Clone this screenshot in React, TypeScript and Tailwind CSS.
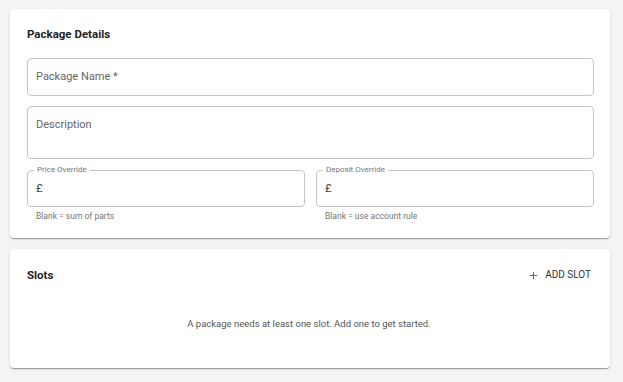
import React from "react";

const font = { fontFamily: "Roboto, 'Liberation Sans', Arial, sans-serif" };

function Outlined({ label, height, legend, value, helper }: { label?: string; height: string; legend?: string; value?: string; helper?: string }) {
  return (
    <div className="flex flex-col">
      <div className={`relative rounded-[4px] border border-[#c4c4c4] ${height}`}>
        {legend && (
          <span className="absolute left-[6px] top-[-6px] bg-white px-[3px] text-[8px] leading-[10px] text-[#757575]">
            {legend}
          </span>
        )}
        {label && (
          <div className="pl-[8px] pt-[10px] text-[11px] leading-[16px] text-[#666]">{label}</div>
        )}
        {value && (
          <div className="pl-[8px] pt-[9px] text-[11.5px] leading-[16px] text-[#444]">{value}</div>
        )}
      </div>
      {helper && (
        <div className="pl-[9px] pt-[4px] text-[8.5px] leading-[10px] text-[#757575]">{helper}</div>
      )}
    </div>
  );
}

export default function App() {
  const shadow =
    "shadow-[0_2px_1px_-1px_rgba(0,0,0,0.2),0_1px_1px_0_rgba(0,0,0,0.14),0_1px_3px_0_rgba(0,0,0,0.12)]";
  return (
    <div className="min-h-screen bg-[#f4f4f4] pl-[10px] pt-[9px]" style={font}>
      <div className={`w-[600px] rounded-[4px] bg-white pl-[17px] pr-[16px] pt-[17px] pb-[17px] ${shadow}`}>
        <div className="text-[11.5px] font-bold leading-[16px] text-[#1f1f1f]">Package Details</div>
        <div className="mt-[16px] flex flex-col gap-[10px]">
          <Outlined label="Package Name *" height="h-[38px]" />
          <Outlined label="Description" height="h-[53px]" />
          <div className="mt-[1px] grid grid-cols-2 gap-[11px]">
            <Outlined legend="Price Override" value="£" height="h-[37px]" helper="Blank = sum of parts" />
            <Outlined legend="Deposit Override" value="£" height="h-[37px]" helper="Blank = use account rule" />
          </div>
        </div>
      </div>
      <div className={`mt-[11px] w-[600px] h-[119px] rounded-[4px] bg-white pl-[17px] pr-[19px] pt-[18px] ${shadow}`}>
        <div className="flex items-center justify-between">
          <div className="text-[11.5px] font-bold leading-[16px] text-[#1f1f1f]">Slots</div>
          <div className="flex items-center gap-[7px] text-[10px] font-normal leading-[14px] text-[#333]">
            <svg width="9" height="9" viewBox="0 0 10 10">
              <path d="M5 1v8M1 5h8" stroke="#666" strokeWidth="1.2" />
            </svg>
            ADD SLOT
          </div>
        </div>
        <div className="mt-[34px] text-center text-[9.5px] leading-[14px] text-[#555]">
          A package needs at least one slot. Add one to get started.
        </div>
      </div>
    </div>
  );
}
